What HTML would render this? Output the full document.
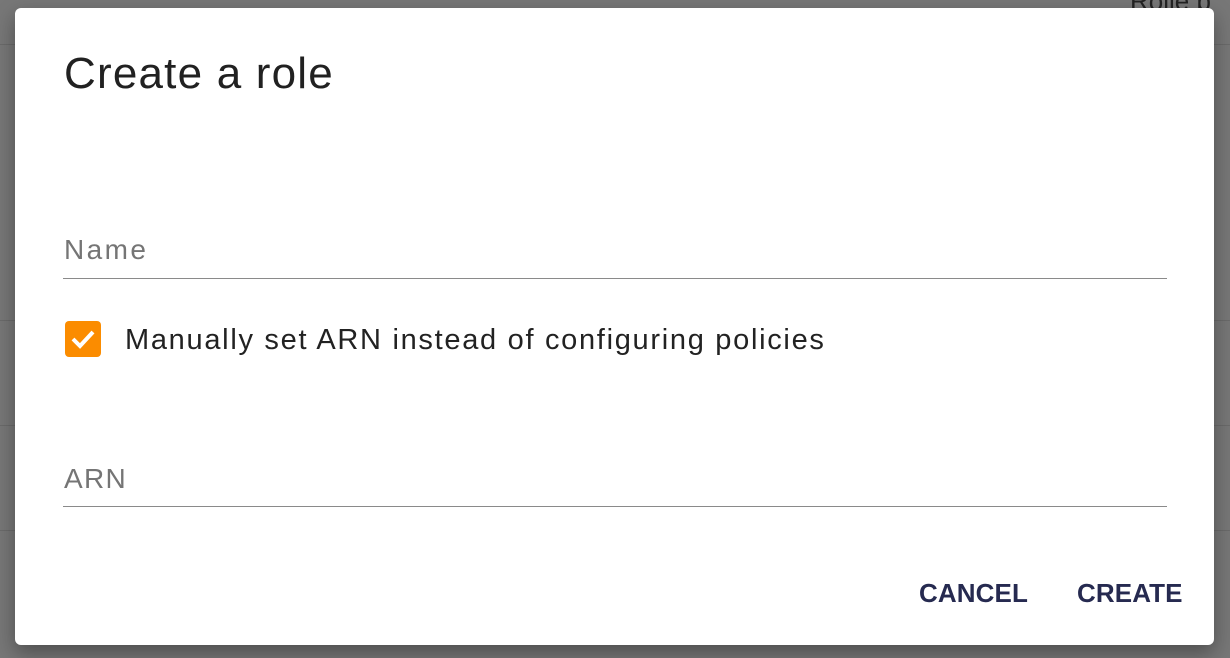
<!DOCTYPE html>
<html><head><style>
html,body{margin:0;padding:0;width:1230px;height:658px;overflow:hidden;background:#777;font-family:"Liberation Sans",sans-serif;}
.bgline{position:absolute;left:0;width:1230px;height:1px;background:#6a6a6a;}
.dlg{position:absolute;left:15px;top:8px;width:1199px;height:637px;background:#fff;border-radius:6px;box-shadow:0 8px 20px rgba(0,0,0,.35);}
.title{position:absolute;left:49px;top:41px;font-size:44px;color:#212121;letter-spacing:1.2px;}
.field{position:absolute;left:48px;width:1104px;border-bottom:1.5px solid #8a8a8a;}
.lbl{position:absolute;left:49px;font-size:28px;color:#757575;}
.cb{position:absolute;left:50px;top:313px;width:36px;height:36px;background:#fb8c00;border-radius:4px;}
.cbt{position:absolute;left:110px;top:316px;font-size:29px;color:#222;letter-spacing:1.7px;}
.btn{position:absolute;top:570px;font-size:26px;font-weight:bold;color:#262a50;letter-spacing:0.1px;}
</style></head><body>
<div class="bgline" style="top:44px"></div>
<div class="bgline" style="top:320px"></div>
<div class="bgline" style="top:425px"></div>
<div class="bgline" style="top:530px"></div>
<div style="position:absolute;left:1130px;top:-14px;font-size:26px;color:#222">Rolle p</div>
<div class="dlg">
<div class="title">Create a role</div>
<div class="lbl" style="top:226px;letter-spacing:2.4px">Name</div>
<div class="field" style="top:270px"></div>
<div class="cb"><svg width="36" height="36" viewBox="0 0 36 36"><path d="M8 18 L15 25 L28 11" stroke="#fff" stroke-width="4" fill="none"/></svg></div>
<div class="cbt">Manually set ARN instead of configuring policies</div>
<div class="lbl" style="top:455px;letter-spacing:1.3px">ARN</div>
<div class="field" style="top:498px"></div>
<div class="btn" style="left:904px">CANCEL</div>
<div class="btn" style="left:1062px">CREATE</div>
</div>
</body></html>
